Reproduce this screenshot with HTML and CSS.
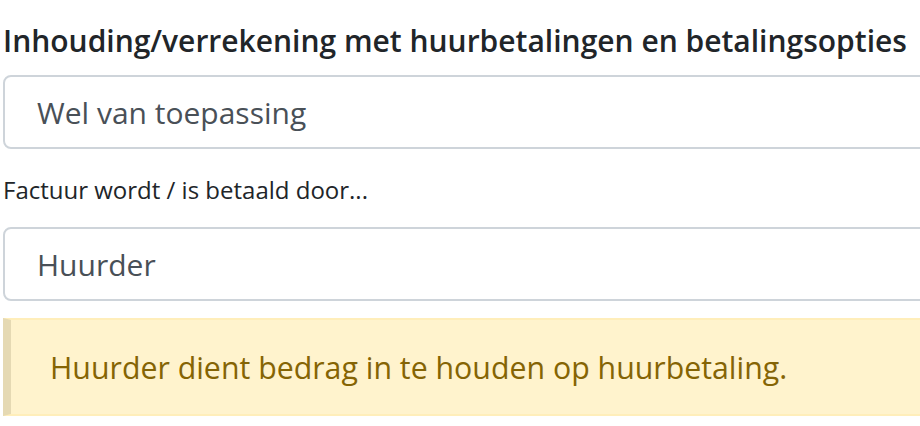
FILE: index.html
```html
<!DOCTYPE html>
<html lang="nl">
<head>
<meta charset="utf-8">
<title>Inhouding</title>
<link rel="stylesheet" href="styles.css">
</head>
<body>
<div class="page">
  <h2 class="section-title">Inhouding/verrekening met huurbetalingen en betalingsopties</h2>
  <div class="field">Wel van toepassing</div>
  <label class="field-label">Factuur wordt / is betaald door...</label>
  <div class="field">Huurder</div>
  <div class="alert">Huurder dient bedrag in te houden op huurbetaling.</div>
</div>
</body>
</html>
```
FILE: styles.css
```css
html, body {
  margin: 0;
  padding: 0;
  background: #ffffff;
  overflow: hidden;
}
.page {
  width: 1000px;
  padding-left: 3px;
  font-family: "Open Sans", "Noto Sans", sans-serif;
}
.section-title {
  margin: 0 0 10px 0;
  padding-top: 17px;
  font-size: 30px;
  line-height: 48px;
  font-weight: 600;
  color: #212529;
  white-space: nowrap;
}
.field {
  box-sizing: border-box;
  height: 74px;
  border: 2px solid #ced4da;
  border-radius: 8px;
  padding-left: 32px;
  font-size: 30px;
  line-height: 72px;
  color: #495057;
  background: #fff;
}
.field-label {
  display: block;
  margin: 0;
  padding-top: 25px;
  height: 53px;
  font-size: 24px;
  line-height: 32px;
  color: #212529;
}
.alert {
  box-sizing: border-box;
  margin-top: 17px;
  height: 98px;
  border: 2px solid #ffeeba;
  border-left: 8px solid #e5d9b3;
  background: #fff3cd;
  padding-left: 39px;
  font-size: 30.3px;
  line-height: 96px;
  color: #856404;
}
```
